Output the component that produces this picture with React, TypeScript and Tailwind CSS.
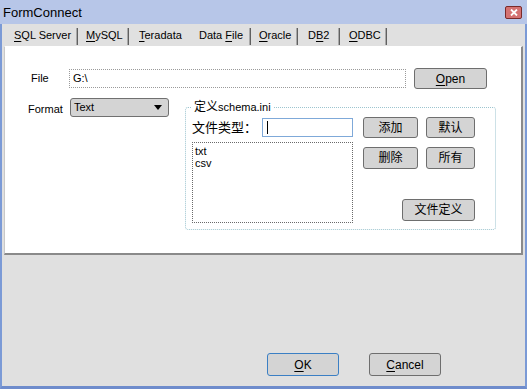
import React from "react";

const latin = { fontFamily: '"Liberation Sans", Arial, sans-serif' };
const cjk = { fontFamily: '"Liberation Sans", "Noto Sans CJK SC", sans-serif' };

function Mn({ children }: { children: React.ReactNode }) {
  return <span className="underline decoration-1 underline-offset-[2px]">{children}</span>;
}

function Sep() {
  return <div className="mt-[3px] h-[17px] w-[2px] border-r border-l border-r-[#606060] border-l-[#a8a8a8]" />;
}

function Btn({
  children,
  className = "",
  blue = false,
}: {
  children: React.ReactNode;
  className?: string;
  blue?: boolean;
}) {
  return (
    <button
      className={`flex items-center justify-center rounded-[3px] border bg-[#d4d4d4] text-[12px] text-black ${
        blue ? "border-[#3b7fc4]" : "border-[#6e6e6e]"
      } ${className}`}
    >
      {children}
    </button>
  );
}

const tabs = [
  { w: "w-[72px] pl-[10px]", label: <><Mn>S</Mn>QL Server</>, sep: true },
  { w: "w-[49px] pl-[8px]", label: <><Mn>M</Mn>ySQL</>, sep: true },
  { w: "w-[61px] pl-[10px]", label: <><Mn>T</Mn>eradata</>, sep: false },
  { w: "w-[59px] pl-[9px]", label: <>Data <Mn>F</Mn>ile</>, sep: true },
  { w: "w-[45px] pl-[8px]", label: <><Mn>O</Mn>racle</>, sep: true },
  { w: "w-[40px] pl-[10px]", label: <>D<Mn>B</Mn>2</>, sep: true },
  { w: "w-[45px] pl-[9px]", label: <><Mn>O</Mn>DBC</>, sep: true },
];

export default function App() {
  return (
    <div
      className="flex h-[389px] w-[527px] flex-col border-x-[2px] border-b-[3px] border-x-[#7b9ad6] border-b-[#6f8ccc] bg-[#e0e0e0] text-black"
      style={latin}
    >
      {/* title bar */}
      <div className="-mx-[2px] flex h-[24px] items-center justify-between bg-[#b7c6e8] pl-[3px] pr-[5px]">
        <span className="text-[13px] leading-none">FormConnect</span>
        <div className="flex h-[13px] w-[17px] items-center justify-center rounded-[2px] border border-[#7a2a2a] bg-[#d47272]">
          <svg width="8" height="7" viewBox="0 0 8 7">
            <path d="M1 0.5 L7 6.5 M7 0.5 L1 6.5" stroke="#fff" strokeWidth="1.8" />
          </svg>
        </div>
      </div>

      {/* tabs */}
      <div className="flex h-[22px] pl-[2px] pt-[1px] text-[11px]">
        {tabs.map((t, i) => (
          <React.Fragment key={i}>
            <div className={`${t.w} flex items-center leading-none`}>
              <span className="whitespace-nowrap">{t.label}</span>
            </div>
            {t.sep && <Sep />}
          </React.Fragment>
        ))}
      </div>

      {/* panel */}
      <div className="ml-[2px] mr-[2px] h-[209px] border border-b-2 border-r-2 border-[#8a8a8a] border-l-[#c8c8c8] border-t-white bg-white pt-[21px]">
        <div className="flex h-[21px] items-center">
          <span className="ml-[26px] w-[38px] text-[11px]">File</span>
          <div className="flex h-[19px] w-[337px] items-center border border-dotted border-[#9a9a9a] pl-[3px] text-[11px]">
            G:\
          </div>
          <Btn className="ml-[8px] h-[21px] w-[73px] text-[11px]">
            <Mn>O</Mn>pen
          </Btn>
        </div>

        <div className="mt-[9px] flex">
          <span className="ml-[23px] mt-[3px] w-[42px] text-[11px]">Format</span>
          <div className="flex h-[19px] w-[99px] items-center justify-between rounded-[3px] border border-[#707070] bg-[#d4d4d4] pl-[3px] pr-[6px] text-[11px]">
            <span>Text</span>
            <svg width="8" height="5" viewBox="0 0 8 5">
              <path d="M0 0 H8 L4 5 Z" fill="#000" />
            </svg>
          </div>

          {/* group box */}
          <div className="relative ml-[16px] mt-[9px] flex h-[123px] w-[311px] rounded-[3px] border border-dotted border-[#9cc4cf]">
            <span className="absolute -top-[8px] left-[6px] bg-white px-[2px] text-[11px] leading-[14px]" style={cjk}>
              <span className="text-[12px]">定义</span>schema.ini
            </span>

            <div className="pl-[6px] pt-[10px]">
              <div className="flex h-[19px] items-center">
                <span className="w-[70px] text-[13px]" style={cjk}>
                  文件类型：
                </span>
                <div className="flex h-[19px] w-[91px] items-center border border-[#7fa9d9] pl-[4px]">
                  <div className="h-[13px] w-px bg-black" />
                </div>
              </div>
              <div className="mt-[5px] flex h-[81px] w-[161px] flex-col border border-dotted border-[#6a6a6a] pl-[2px] pt-[2px] text-[11px] leading-[12px]">
                <span>txt</span>
                <span>csv</span>
              </div>
            </div>

            <div className="ml-[10px] flex flex-col pt-[9px]" style={cjk}>
              <div className="flex gap-[8px]">
                <Btn className="h-[21px] w-[55px]">添加</Btn>
                <Btn className="h-[21px] w-[49px]">默认</Btn>
              </div>
              <div className="mt-[9px] flex gap-[8px]">
                <Btn className="h-[22px] w-[55px]">删除</Btn>
                <Btn className="h-[22px] w-[49px]">所有</Btn>
              </div>
              <Btn className="mt-[30px] h-[22px] w-[73px] self-end">文件定义</Btn>
            </div>
          </div>
        </div>
      </div>

      {/* footer buttons */}
      <div className="flex gap-[30px] pl-[265px] pt-[98px] text-[11px]">
        <Btn blue className="h-[23px] w-[72px] text-[11px]">
          <Mn>O</Mn>K
        </Btn>
        <Btn className="h-[23px] w-[72px] text-[11px]">
          <Mn>C</Mn>ancel
        </Btn>
      </div>
    </div>
  );
}
